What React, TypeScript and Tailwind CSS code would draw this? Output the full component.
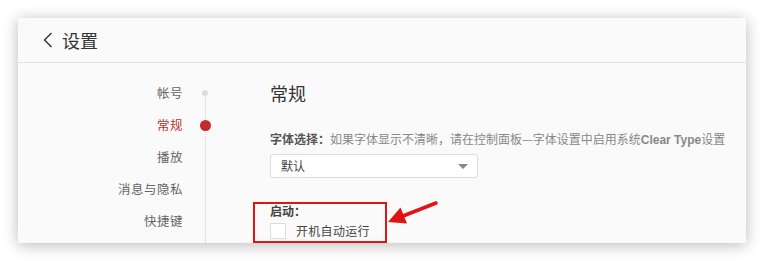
const navItems = ["帐号", "常规", "播放", "消息与隐私", "快捷键"]
const activeIndex = 1

export default function App() {
    return (
        <div
            className="w-[764px] h-[261px] bg-white pt-[18px] px-[18px] overflow-hidden"
            style={{ fontFamily: '"Noto Sans CJK SC", "Liberation Sans", sans-serif' }}
        >
            <div className="relative w-[728px] h-[225px] bg-[#fafafa] shadow-[0_2px_14px_rgba(0,0,0,0.28)] overflow-hidden">
                {/* header */}
                <div className="h-[45px] flex items-center border-b border-[#e2e2e2] pl-[25px]">
                    <svg width="10" height="16" viewBox="0 0 10 16" className="text-[#333]">
                        <polyline points="8.5,1 1.5,8 8.5,15" fill="none" stroke="currentColor" strokeWidth="1.4" />
                    </svg>
                    <span className="ml-[9px] text-[18px] leading-[24px] text-[#333]">设置</span>
                </div>

                {/* body */}
                <div className="flex">
                    {/* side nav */}
                    <div className="relative w-[252px] pt-[14px] pl-[60px]">
                        <div className="absolute left-[186.5px] top-[30px] bottom-0 border-l border-dotted border-[#cfcfcf]" />
                        {navItems.map((item, i) => (
                            <div key={item} className="flex items-center h-[32px]">
                                <span
                                    className={`w-[105px] text-right text-[12.5px] leading-[16px] tracking-[0.5px] ${
                                        i === activeIndex ? "text-[#b8312f]" : "text-[#666]"
                                    }`}
                                >
                                    {item}
                                </span>
                                <div className="relative w-[44px] flex justify-center">
                                    {i === 0 && <span className="size-[6px] rounded-full bg-[#dcdcdc]" />}
                                    {i === activeIndex && <span className="size-[11px] rounded-full bg-[#c62a2a]" />}
                                </div>
                            </div>
                        ))}
                    </div>

                    {/* content */}
                    <div className="flex-1 pt-[18px]">
                        <h2 className="text-[18px] leading-[24px] text-[#333]">常规</h2>

                        <p className="mt-[25px] text-[12px] leading-[18px] text-[#888] whitespace-nowrap">
                            <span className="font-bold text-[#555]">字体选择：</span>
                            如果字体显示不清晰，请在控制面板—字体设置中启用系统
                            <span className="font-bold" style={{ fontFamily: '"Liberation Sans", sans-serif' }}>Clear Type</span>
                            设置
                        </p>

                        <div className="mt-[5px] w-[208px] h-[24px] flex items-center justify-between rounded-[3px] border border-[#dcdcdc] bg-white pl-[10px] pr-[9px]">
                            <span className="text-[12px] text-[#444]">默认</span>
                            <span className="w-0 h-0 border-l-[5px] border-r-[5px] border-t-[5px] border-l-transparent border-r-transparent border-t-[#888]" />
                        </div>

                        <div className="mt-[24px] ml-[-17px] w-[134px] h-[41px] border-2 border-[#e01414] pl-[15px]">
                            <div className="text-[12px] leading-[14px] font-bold text-[#444]">启动：</div>
                            <label className="mt-[5px] flex items-center">
                                <span className="size-[16px] border border-[#dcdcdc] bg-white" />
                                <span className="ml-[10px] text-[12px] leading-[16px] text-[#444] tracking-[0.3px]">开机自动运行</span>
                            </label>
                        </div>
                    </div>
                </div>

                {/* annotation arrow */}
                <svg className="absolute left-[366px] top-[180px]" width="60" height="35" viewBox="0 0 60 35">
                    <line x1="52" y1="5" x2="19" y2="18" stroke="#e01414" strokeWidth="3.5" strokeLinecap="round" />
                    <polygon points="4,24 16.5,9.5 23,25.5" fill="#e01414" />
                </svg>
            </div>
        </div>
    )
}
